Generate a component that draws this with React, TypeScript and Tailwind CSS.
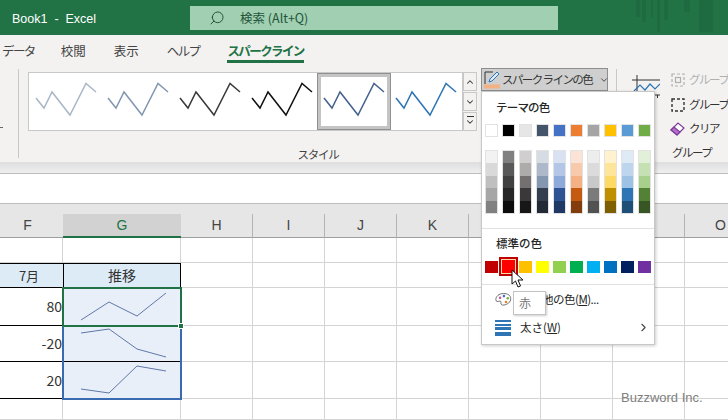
import { ChevronDown, ChevronRight, ChevronUp, Search } from 'lucide-react';

const FONT = '"Noto Sans CJK JP", "Liberation Sans", sans-serif';
const LATIN = '"Liberation Sans", sans-serif';

const theme = ['#ffffff', '#000000', '#e7e6e6', '#44546a', '#4472c4', '#ed7d31', '#a5a5a5', '#ffc000', '#5b9bd5', '#70ad47'];
const shades = [
  ['#f2f2f2', '#d9d9d9', '#bfbfbf', '#a6a6a6', '#808080'],
  ['#808080', '#595959', '#404040', '#262626', '#0d0d0d'],
  ['#d0cece', '#aeabab', '#757070', '#3a3838', '#181717'],
  ['#d6dce4', '#adb9ca', '#8497b0', '#333f4f', '#222b35'],
  ['#d9e2f3', '#b4c6e7', '#8eaadb', '#2f5496', '#1f3864'],
  ['#fbe4d5', '#f7caac', '#f4b183', '#c55a11', '#833c0b'],
  ['#ededed', '#dbdbdb', '#c9c9c9', '#7b7b7b', '#525252'],
  ['#fff2cc', '#ffe599', '#ffd966', '#bf8f00', '#7f6000'],
  ['#deeaf6', '#bdd6ee', '#9cc2e5', '#2e75b5', '#1f4e79'],
  ['#e2efd9', '#c5e0b3', '#a8d08d', '#538135', '#375623'],
];
const standard = ['#c00000', '#ff0000', '#ffc000', '#ffff00', '#92d050', '#00b050', '#00b0f0', '#0070c0', '#002060', '#7030a0'];

const styles = [
  { color: '#a9b7c6', border: false },
  { color: '#8497b0', border: false },
  { color: '#3a3a3a', border: false },
  { color: '#111111', border: false },
  { color: '#44618f', border: true },
  { color: '#2e75b5', border: false },
];

const columns = ['H', 'I', 'J', 'K', 'L', 'M', 'N', 'O'];

function Spark({ color }: { color: string }) {
  return (
    <svg className="shrink-0 overflow-visible" width="60" height="33" viewBox="0 0 60 33" fill="none">
      <path d="M0 15 L8 25 L16 9 L34 32 L50 0.500 L60 9" stroke={color} strokeWidth="1.500" />
    </svg>
  );
}

function StyleGallery() {
  return (
    <div className="mt-[4px] flex h-[59px] shrink-0">
      <div className="flex w-[435px] items-center border border-[#c8c8c8] bg-white pl-px">
        {styles.map((s, i) => (
          <div
            key={i}
            className={`flex h-[55px] w-[72px] shrink-0 items-center justify-center pb-[5px] ${s.border ? 'border-[3px] border-[#c4c4c4] outline outline-1 outline-[#909090]' : ''}`}
          >
            <Spark color={s.color} />
          </div>
        ))}
      </div>
      <div className="flex w-[14px] flex-col gap-px text-[#333]">
        <span className="flex flex-1 items-center justify-center border border-[#c8c8c8]"><ChevronUp size={10} strokeWidth={2.5} /></span>
        <span className="flex flex-1 items-center justify-center border border-[#c8c8c8]"><ChevronDown size={10} strokeWidth={2.5} /></span>
        <span className="flex flex-1 flex-col items-center justify-center border border-[#c8c8c8]">
          <span className="h-px w-[7px] bg-[#333]" />
          <ChevronDown size={10} strokeWidth={2.5} />
        </span>
      </div>
    </div>
  );
}

function Swatch({ color }: { color: string }) {
  return <div className="h-[13px] w-[13px] border border-[#e2e2e2]" style={{ background: color }} />;
}

function ColorMenu() {
  return (
    <div className="absolute left-[481px] top-[91px] z-20 h-[254px] w-[174px] border border-[#c8c8c8] bg-white text-[#262626] shadow-[1px_1px_3px_rgba(0,0,0,0.2)]">
      <div className="pl-[14px] pt-[5px] text-[11.5px] font-medium leading-[20px] tracking-[-0.8px]">テーマの色</div>
      <div className="mt-[7px] flex gap-[4px] pl-[3px]">
        {theme.map((c) => <Swatch key={c} color={c} />)}
      </div>
      <div className="mt-[13px] flex gap-[4px] pl-[3px]">
        {shades.map((col, i) => (
          <div key={i} className="w-[13px] border border-[#e2e2e2]">
            {col.map((c) => <div key={c} className="h-[12.4px]" style={{ background: c }} />)}
          </div>
        ))}
      </div>
      <div className="mt-[14px] border-t border-[#e1e1e1] pl-[14px] pt-[4px] text-[11.5px] font-medium leading-[20px]">標準の色</div>
      <div className="relative mt-[8px] flex gap-[4px] pl-[3px]">
        {standard.map((c) => <div key={c} className="h-[12px] w-[13px]" style={{ background: c }} />)}
        <div className="absolute left-[17px] top-[-4px] h-[19px] w-[19px] border-2 border-[#c00000] bg-[#fcd9a8] p-[1px]">
          <div className="h-full w-full bg-[#ff0000]" />
        </div>
      </div>
      <div className="mt-[11px] border-t border-[#e1e1e1]" />
      <div className="flex h-[30px] items-center pl-[13px] text-[11.5px] leading-none">
        <svg className="shrink-0" width="17" height="15" viewBox="0 0 20 17" fill="none">
          <path d="M10 1.500C4.500 1.500 1 5 1 8.500c0 3 2.500 2.500 4 2 1.500-.5 2.500.5 2 2-.4 1.600 1 3 3.500 2.500 4.500-.7 8-3.500 8-7.500S15 1.500 10 1.500Z" fill="#fff" stroke="#666" strokeWidth="1.100" />
          <circle cx="6" cy="6.500" r="1.500" fill="#c8559b" />
          <circle cx="10.500" cy="4.500" r="1.500" fill="#4472c4" />
          <circle cx="15" cy="7" r="1.500" fill="#70ad47" />
          <circle cx="13" cy="11.500" r="1.500" fill="#ed7d31" />
        </svg>
        <span className="ml-[8px] whitespace-nowrap tracking-[-0.5px]">その他の色(<u>M</u>)...</span>
      </div>
      <div className="flex h-[26px] items-center pl-[13px] text-[11.5px] leading-none">
        <div className="flex h-[16px] w-[16px] shrink-0 flex-col justify-between">
          <div className="h-[2px] bg-[#2e75b5]" />
          <div className="h-[2px] bg-[#2e75b5]" />
          <div className="h-[3px] bg-[#2e75b5]" />
          <div className="h-[4px] bg-[#2e75b5]" />
        </div>
        <span className="ml-[9px]">太さ(<u>W</u>)</span>
        <ChevronRight size={13} className="absolute right-[4px] text-[#444]" />
      </div>
      <div className="absolute left-[31px] top-[199px] flex h-[24px] w-[33px] items-center border border-[#c4c4c4] bg-white pl-[5px] text-[12px] text-[#777] shadow-[1px_1px_2px_rgba(0,0,0,0.2)]">赤</div>
      <svg className="absolute left-[29px] top-[177px]" width="13" height="20" viewBox="0 0 13 20">
        <path d="M1 1 L1 15 L4.500 12 L7 18 L9.500 17 L7 11 L12 11 Z" fill="#fff" stroke="#111" strokeWidth="1" strokeLinejoin="round" />
      </svg>
    </div>
  );
}

export default function App() {
  return (
    <div className="relative h-[420px] w-[728px] overflow-hidden bg-white" style={{ fontFamily: FONT }}>
      {/* title bar */}
      <div className="flex h-[35px] bg-[#217346] text-white">
        <div className="w-[190px] shrink-0 pl-[12px] pt-[11px] text-[12.5px] leading-[16px]" style={{ fontFamily: LATIN }}>Book1&nbsp; -&nbsp; Excel</div>
        <div className="mt-[6px] flex h-[24px] w-[368px] shrink-0 items-center bg-[#a0cfb1] text-[#24543a]">
          <Search size={16} className="ml-[19px] shrink-0 -scale-x-100" strokeWidth={1.5} />
          <span className="ml-[15px] text-[12.5px]">検索 (Alt+Q)</span>
        </div>
        <div className="ml-[78px] flex h-[32px] shrink-0 items-start opacity-30">
          <div className="h-[17px] w-[4px] bg-[#1a5c38]" />
          <div className="ml-[2px] h-[22px] w-[4px] bg-[#1a5c38]" />
          <div className="ml-[5px] h-[18px] w-[2px] bg-[#1a5c38]" />
          <div className="ml-[4px] h-[32px] w-[3px] bg-[#1a5c38]" />
          <div className="ml-[4px] h-[20px] w-[4px] bg-[#1a5c38]" />
          <div className="ml-[16px] h-[12px] w-[6px] bg-[#1a5c38]" />
          <div className="ml-[9px] h-[32px] w-[14px] bg-[#1a5c38]" />
        </div>
      </div>

      {/* tabs */}
      <div className="flex h-[30px] items-start bg-[#f3f2f1] pt-[6px] text-[12.5px] leading-[19px] text-[#444]">
        <span className="ml-[2px] tracking-[-1.6px]">データ</span>
        <span className="ml-[26px]">校閲</span>
        <span className="ml-[28px]">表示</span>
        <span className="ml-[28px] tracking-[-1.6px]">ヘルプ</span>
        <span className="ml-[28px] border-b-[3px] border-[#217346] font-bold tracking-[-1.6px] text-[#217346]">スパークライン</span>
      </div>

      {/* ribbon */}
      <div className="flex h-[97px] bg-[#f3f2f1]">
        <div className="relative my-[4px] w-[19px] shrink-0 border-r border-[#c8c8c8]">
          <div className="absolute left-0 top-[58px] h-px w-[3px] bg-[#666]" />
        </div>
        <div className="ml-[9px] flex w-[580px] shrink-0 flex-col items-center pt-[3px]">
          <div className="flex w-full items-start">
            <StyleGallery />
            <div className="ml-[4px] flex h-[23px] w-[127px] shrink-0 items-center border border-[#8e8e8e] bg-[#cfcfcf] text-[11.5px] leading-none text-[#333]">
              <svg className="ml-[2px] shrink-0" width="17" height="19" viewBox="0 0 17 19" fill="none">
                <path d="M1 14V2h8" stroke="#333" strokeWidth="1" />
                <path d="M5 12l1-3 7-7 2 2-7 7-3 1Z" fill="#dce9f7" stroke="#2e75b5" strokeWidth="1" />
                <rect x="0" y="14.500" width="16" height="4" fill="#f4b183" />
              </svg>
              <span className="ml-px whitespace-nowrap tracking-[-1.6px]">スパーク ラインの色</span>
              <ChevronDown size={10} className="ml-[7px] shrink-0" />
            </div>
          </div>
          <div className="mt-[16px] text-[11.5px] leading-[14px] tracking-[-1.3px] text-[#444]">スタイル</div>
        </div>
        <div className="my-[4px] ml-[8px] h-[89px] w-px shrink-0 bg-[#c8c8c8]" />
        <svg className="ml-[15px] mt-[10px] shrink-0" width="28" height="24" viewBox="0 0 28 24" fill="none">
          <path d="M5 0v20M0 5h28M23 20h5M25.500 20v3" stroke="#333" strokeWidth="1" />
          <path d="M2 16l6-6 5 5 5-6 5 5 5-5" stroke="#2e75b5" strokeWidth="1.200" />
        </svg>
        <div className="ml-[10px] flex shrink-0 flex-col pt-[3px] text-[11.5px] tracking-[-1.5px] text-[#333]">
          <div className="flex h-[24px] items-center text-[#b0b0b0]">
            <svg className="shrink-0" width="16" height="16" viewBox="0 0 16 16" fill="none" stroke="#b0b0b0" strokeWidth="1.200"><rect x="2" y="2" width="12" height="12" strokeDasharray="3 2" /><rect x="5.500" y="5.500" width="5" height="5" /></svg>
            <span className="ml-[3px] whitespace-nowrap">グループ</span>
          </div>
          <div className="flex h-[25px] items-center">
            <svg className="shrink-0" width="16" height="16" viewBox="0 0 16 16" fill="none" stroke="#333" strokeWidth="1.400"><rect x="2" y="2" width="12" height="12" strokeDasharray="3 2" /></svg>
            <span className="ml-[3px] whitespace-nowrap">グループ</span>
          </div>
          <div className="flex h-[23px] items-center">
            <svg className="shrink-0" width="16" height="16" viewBox="0 0 16 16"><path d="M1 9l7-7 6 5-7 7Z" fill="#fff" stroke="#7d3c98" strokeWidth="1.200" /><path d="M1 9l3-3 6 5-3 3Z" fill="#b36fc9" stroke="#7d3c98" strokeWidth="1.200" /></svg>
            <span className="ml-[3px] whitespace-nowrap">クリア</span>
            <ChevronDown size={9} className="ml-[9px] shrink-0" />
          </div>
          <div className="ml-[2px] mt-[4px] whitespace-nowrap leading-[16px]">グループ</div>
        </div>
      </div>

      {/* ribbon shadow band and formula bar */}
      <div className="h-[11px] bg-gradient-to-b from-[#dedede] to-[#efefef]" />
      <div className="h-[31px] border-y border-[#bdbdbd] bg-white" />

      {/* column headers */}
      <div className="flex h-[34px] items-end bg-[#e6e6e6] text-center text-[14px] leading-[22px] text-[#444]" style={{ fontFamily: LATIN }}>
        <div className="h-[24px] w-[63px] shrink-0 border-b border-[#9e9e9e] pr-[8px]">F</div>
        <div className="h-[24px] w-[118px] shrink-0 border-b-[2px] border-[#217346] bg-[#d2d2d2] text-[#217346]">G</div>
        {columns.map((c) => (
          <div key={c} className="h-[24px] w-[72px] shrink-0 border-b border-r border-b-[#9e9e9e] border-r-[#b4b4b4]">{c}</div>
        ))}
      </div>

      {/* sheet */}
      <div className="grid grid-cols-[63px_118px_72px_72px_72px_72px_72px_72px_72px_72px] grid-rows-[25px_25px_38px_36px_37px_21px] text-[14px] text-[#333]">
        {Array.from({ length: 60 }).map((_, i) => (
          <div key={i} className="border-b border-r border-[#d4d4d4]" />
        ))}
        <div className="col-start-1 row-start-2 border-y border-black bg-[#ddebf7] pr-[5px] text-center text-[13px] leading-[23px]">7月</div>
        <div className="col-start-2 row-start-2 border border-black bg-[#ddebf7] text-center leading-[23px]">推移</div>
        {['80', '-20', '20'].map((v, i) => (
          <div
            key={v}
            className={`col-start-1 flex items-center justify-end border-b border-black pr-px ${i === 0 ? 'row-start-3' : i === 1 ? 'row-start-4' : 'row-start-5'}`}
          >
            {v}
          </div>
        ))}
        <div className="col-start-2 row-start-3 row-end-6 m-[-1px] flex flex-col border-2 border-[#3a6bb0] bg-[#e9eff9]">
          <div className="relative h-[37px] border-b border-black">
            <svg className="absolute inset-0" width="114" height="37" fill="none"><path d="M17 31 L45 13 L73 27 L102 4" stroke="#5f78a8" strokeWidth="1" /></svg>
          </div>
          <div className="relative h-[36px] border-b border-black">
            <svg className="absolute inset-0" width="114" height="36" fill="none"><path d="M17 7 L45 3 L73 23 L102 31" stroke="#5f78a8" strokeWidth="1" /></svg>
          </div>
          <div className="relative flex-1">
            <svg className="absolute inset-0" width="114" height="36" fill="none"><path d="M17 27 L45 31 L73 4 L102 9" stroke="#5f78a8" strokeWidth="1" /></svg>
          </div>
        </div>
        <div className="relative col-start-2 row-start-3 m-[-1px] border-2 border-[#217346]">
          <div className="absolute bottom-[-4px] right-[-4px] h-[6px] w-[6px] border border-white bg-[#217346]" />
        </div>
      </div>

      <ColorMenu />

      <div className="absolute left-[621px] top-[390px] text-[13px] leading-[16px] text-[#808080]" style={{ fontFamily: LATIN }}>Buzzword Inc.</div>
    </div>
  );
}
